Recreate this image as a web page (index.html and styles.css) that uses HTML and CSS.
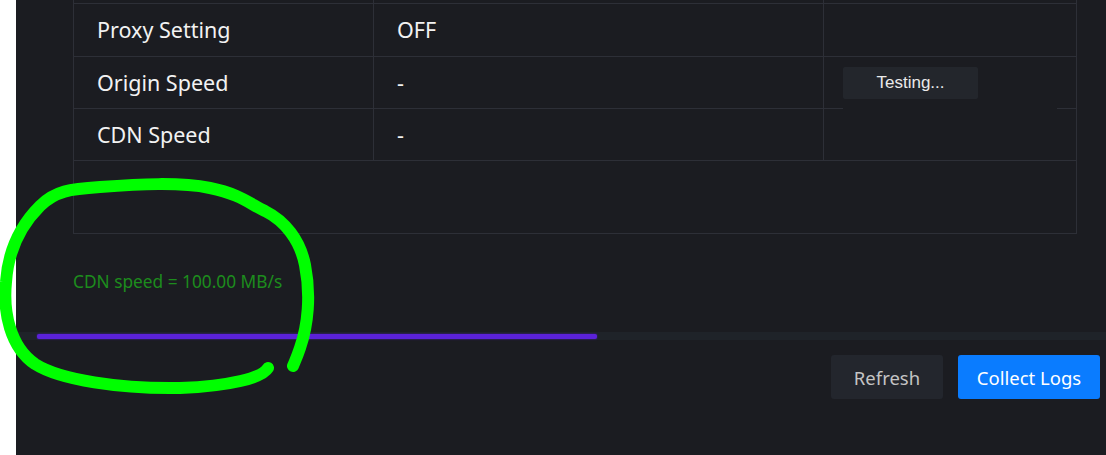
FILE: index.html
```html
<!DOCTYPE html>
<html lang="en">
<head>
<meta charset="utf-8">
<title>Network Diagnostics</title>
<link rel="stylesheet" href="styles.css">
</head>
<body>
<div class="app">
  <div class="content">
    <div class="panel">
      <div class="row stub">
        <div class="cell c1"></div>
        <div class="cell c2"></div>
        <div class="cell c3"></div>
      </div>
      <div class="row first">
        <div class="cell c1">Proxy Setting</div>
        <div class="cell c2">OFF</div>
        <div class="cell c3"></div>
      </div>
      <div class="row">
        <div class="cell c1">Origin Speed</div>
        <div class="cell c2">-</div>
        <div class="cell c3 action">
          <div class="btn-cover"><button class="test-btn">Testing...</button></div>
        </div>
      </div>
      <div class="row">
        <div class="cell c1">CDN Speed</div>
        <div class="cell c2">-</div>
        <div class="cell c3"></div>
      </div>
      <div class="panel-empty"></div>
    </div>
    <p class="result">CDN speed = 100.00 MB/s</p>
  </div>
  <div class="progress"><div class="progress-fill" style="width: 560px"></div></div>
  <div class="actions">
    <button class="btn btn-secondary">Refresh</button>
    <button class="btn btn-primary">Collect Logs</button>
  </div>
  <svg class="annotation" width="1106" height="455" viewBox="0 0 1106 455" aria-hidden="true">
    <path d="M268,368 C262,378 230,386 180,388 C120,389 60,380 35,364 C10,347 3,312 6,282 C8,252 20,226 40,206 C55,191 70,189 100,187 C140,184 180,182 210,188 C240,194 250,204 265,211 C285,221 300,240 305,265 C311,295 308,325 300,348 C297,357 295,361 293,366" fill="none" stroke="#00ff00" stroke-width="12" stroke-linecap="round" stroke-linejoin="round"/>
  </svg>
</div>
</body>
</html>
```

FILE: styles.css
```css
html, body {
  margin: 0;
  padding: 0;
  background: #ffffff;
  height: 455px;
  overflow: hidden;
}

.app {
  position: relative;
  margin-left: 16px;
  height: 455px;
  background: #1b1c21;
  font-family: "Noto Sans", "Open Sans", sans-serif;
  color: #f2f2f2;
}

.content {
  padding-left: 57px;
  width: 1004px;
}

.panel {
  border-left: 1px solid #2d2f37;
  border-right: 1px solid #2d2f37;
  border-bottom: 1px solid #2d2f37;
}

.row {
  display: grid;
  grid-template-columns: 300px 450px 1fr;
  height: 52px;
  border-top: 1px solid #2d2f37;
  box-sizing: border-box;
}

.row.stub {
  height: 3px;
  border-top: none;
}

.row.first {
  height: 53px;
}

.cell {
  display: flex;
  align-items: center;
  font-size: 21.5px;
  line-height: 1;
}

.c1 {
  padding-left: 23px;
  border-right: 1px solid #2d2f37;
}

.c2 {
  padding-left: 23px;
  border-right: 1px solid #2d2f37;
}

.action {
  position: relative;
}

.btn-cover {
  position: absolute;
  left: 19px;
  top: 10px;
  width: 214px;
  height: 43px;
  background: #1b1c21;
}

.test-btn {
  display: block;
  width: 135px;
  height: 32px;
  border: none;
  border-radius: 2px;
  background: #23262c;
  color: #eaeaea;
  font-family: "Liberation Sans", Arial, sans-serif;
  font-size: 17px;
  padding: 0;
}

.panel-empty {
  height: 72px;
  border-top: 1px solid #2d2f37;
}

.result {
  margin: 37px 0 0 0;
  font-size: 17.3px;
  line-height: 22px;
  color: #1d8c1d;
}

.progress {
  margin-top: 39px;
  height: 8px;
  background: #1f2329;
  padding-left: 21px;
  display: flex;
  align-items: center;
}

.progress-fill {
  height: 5px;
  border-radius: 2px;
  background: #5b22d8;
  box-shadow: 0 0 2px #4a1ab0;
}

.actions {
  display: flex;
  justify-content: flex-end;
  gap: 15px;
  padding-right: 6px;
  margin-top: 15px;
}

.btn {
  height: 44px;
  border: none;
  border-radius: 3px;
  font-family: "Noto Sans", "Open Sans", sans-serif;
  font-size: 18.5px;
  padding: 0;
}

.btn-secondary {
  width: 112px;
  background: #23262d;
  color: #c4c4c4;
}

.btn-primary {
  width: 142px;
  background: #0a7cff;
  color: #ffffff;
}

.annotation {
  position: absolute;
  left: -16px;
  top: 0;
  pointer-events: none;
}
```
